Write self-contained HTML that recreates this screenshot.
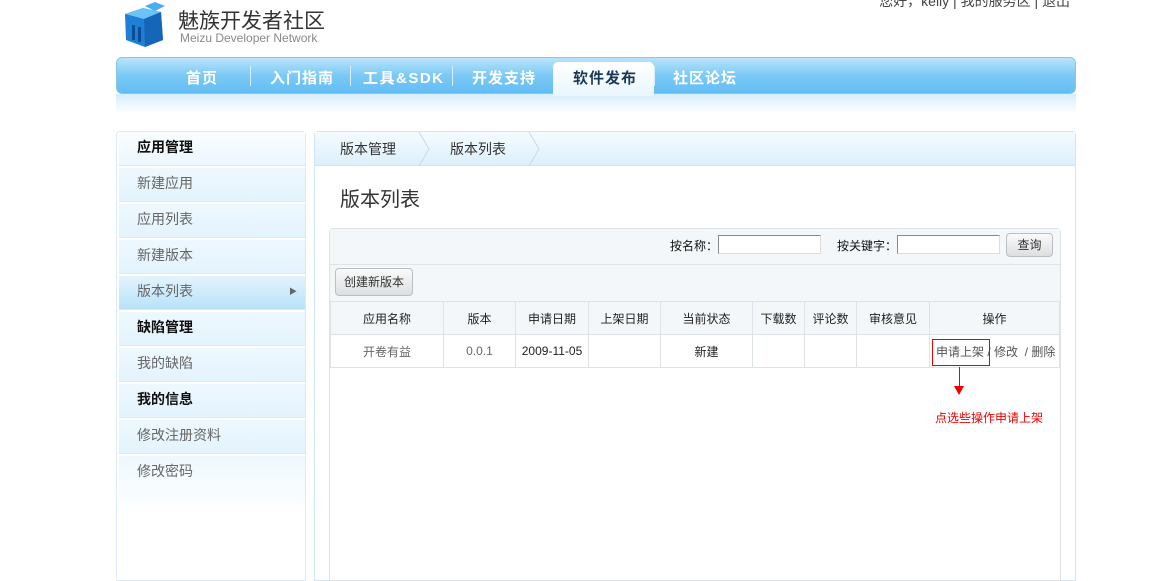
<!DOCTYPE html>
<html><head><meta charset="utf-8"><style>
*{margin:0;padding:0;box-sizing:border-box}
body{width:1176px;height:581px;overflow:hidden;background:#fff;font-family:"Liberation Sans","Noto Sans CJK SC",sans-serif;font-size:13px;color:#333;position:relative}
.a{position:absolute}
.nav{left:116px;top:57px;width:960px;height:37px;border-radius:6px;background:linear-gradient(#b8e4fb,#7cc9f5 50%,#62bdf3);border:1px solid #8cc6e6}
.refl{left:116px;top:94px;width:960px;height:20px;background:linear-gradient(#d6eefb,#fff)}
.ni{top:67px;color:#fff;font-size:15px;font-weight:bold;letter-spacing:1px}
.sep{top:66px;width:1px;height:20px;background:#d7effc}
.side{left:116px;top:131px;width:190px;height:450px;border:1px solid #dcecf6;border-radius:4px 4px 0 0;background:#fff}
.si{position:absolute;left:2px;width:186px;height:34px;padding-left:18px;line-height:31px;font-size:14px;color:#666;background:linear-gradient(#eef8fe,#e3f3fd);border-bottom:1px solid #d8ecf7}
.si.b{color:#111;font-weight:bold}
.main{left:314px;top:131px;width:762px;height:450px;border:1px solid #cfe6f4;border-radius:4px 4px 0 0}
.bc{left:0;top:0;width:760px;height:34px;background:linear-gradient(#f4fbff,#dcf0fc);border-bottom:1px solid #cfe6f4}
.box{left:329px;top:228px;width:732px;height:353px;border:1px solid #dde3e8;border-radius:4px 4px 0 0}
table{border-collapse:collapse;position:absolute;left:330px;top:301px;font-size:12px}
td{border:1px solid #dde3e8;text-align:center;height:33px;color:#222}
tr.h td{background:#f3f7fa}
input{position:absolute;height:19px;border:1px solid #888;border-right-color:#ddd;border-bottom-color:#ddd;background:#fff}
.btn{position:absolute;border:1px solid #b9bfc3;border-radius:4px;background:linear-gradient(#fafafa,#dcdfe1);font-size:12px;text-align:center;color:#333}
</style></head><body>
<div class="a" style="right:106px;top:-9px;font-size:14px;color:#444">您好，kelly | 我的服务区 | 退出</div>
<svg class="a" style="left:123px;top:2px" width="46" height="46" viewBox="0 0 46 46">
<path d="M2 12 L20 6 L38 10 L40 38 L22 45 L3 38Z" fill="#1f7fd6"/>
<path d="M2 12 L20 6 L38 10 L21 17Z" fill="#6bc3f5"/>
<path d="M21 17 L38 10 L40 38 L22 45Z" fill="#1565b8"/>
<path d="M22 4 L32 0 L42 4 L32 9Z" fill="#49aef0"/>
<rect x="9" y="23" width="3" height="15" fill="#0d4d95"/><rect x="15" y="25" width="3" height="15" fill="#0d4d95"/>
</svg>
<div class="a" style="left:178px;top:5px;font-size:21px;color:#333">魅族开发者社区</div>
<div class="a" style="left:180px;top:31px;font-size:12px;color:#888">Meizu Developer Network</div>
<div class="a nav"></div><div class="a refl"></div>
<div class="a" style="left:553px;top:62px;width:101px;height:34px;background:linear-gradient(#fff,#e8f6fe);border-radius:5px 5px 0 0"></div>
<div class="a ni" style="left:186px">首页</div>
<div class="a sep" style="left:250px"></div>
<div class="a ni" style="left:270px">入门指南</div>
<div class="a sep" style="left:350px"></div>
<div class="a ni" style="left:363px;letter-spacing:1.5px">工具&amp;SDK</div>
<div class="a sep" style="left:452px"></div>
<div class="a ni" style="left:472px">开发支持</div>
<div class="a ni" style="left:573px;color:#1c3a55">软件发布</div>
<div class="a sep" style="left:654px"></div>
<div class="a ni" style="left:673px">社区论坛</div>
<div class="a side">
<div class="si b" style="top:0;background:linear-gradient(#fafdff,#ecf7fe)">应用管理</div>
<div class="si" style="top:36px">新建应用</div>
<div class="si" style="top:72px">应用列表</div>
<div class="si" style="top:108px">新建版本</div>
<div class="si" style="top:144px;background:linear-gradient(#e4f4fd,#b8e2fa)">版本列表<span style="position:absolute;left:170px;top:0;font-size:8px;color:#666">▶</span></div>
<div class="si b" style="top:180px">缺陷管理</div>
<div class="si" style="top:216px">我的缺陷</div>
<div class="si b" style="top:252px">我的信息</div>
<div class="si" style="top:288px">修改注册资料</div>
<div class="si" style="top:324px;height:60px;background:linear-gradient(#eef8fe,#fff);border:0">修改密码</div>
</div>
<div class="a main">
<div class="a bc"></div>
<svg class="a" style="left:0;top:0" width="760" height="34"><path d="M104 0 L114 17 L104 34 M214 0 L224 17 L214 34" stroke="#c5dbe8" fill="none"/></svg>
<div class="a" style="left:25px;top:7px;font-size:14px;color:#333">版本管理</div>
<div class="a" style="left:135px;top:7px;font-size:14px;color:#333">版本列表</div>
<div class="a" style="left:25px;top:51px;font-size:20px;color:#333">版本列表</div>
</div>
<div class="a box"><div style="height:36px;background:#f3f7fa;border-bottom:1px solid #dde3e8"></div><div style="height:37px;background:#f3f7fa"></div></div>
<div class="a" style="left:670px;top:237px;font-size:12px;color:#111">按名称：</div>
<input style="left:718px;top:235px;width:103px">
<div class="a" style="left:837px;top:237px;font-size:12px;color:#111">按关键字：</div>
<input style="left:897px;top:235px;width:103px">
<div class="btn" style="left:1006px;top:233px;width:47px;height:24px;line-height:22px">查询</div>
<div class="btn" style="left:335px;top:268px;width:78px;height:28px;line-height:26px">创建新版本</div>
<table>
<tr class="h"><td style="width:113px">应用名称</td><td style="width:72px">版本</td><td style="width:73px">申请日期</td><td style="width:72px">上架日期</td><td style="width:92px">当前状态</td><td style="width:52px">下载数</td><td style="width:52px">评论数</td><td style="width:73px">审核意见</td><td style="width:130px">操作</td></tr>
<tr><td style="color:#666">开卷有益</td><td style="color:#666">0.0.1</td><td>2009-11-05</td><td></td><td>新建</td><td></td><td></td><td></td><td style="text-align:left;padding-left:6px;color:#555">申请上架 / 修改 &nbsp;/ 删除</td></tr>
</table>
<div class="a" style="left:932px;top:339px;width:58px;height:27px;border:1px solid #e00"></div>
<div class="a" style="left:959px;top:367px;width:1px;height:20px;background:#e00"></div>
<div class="a" style="left:954px;top:386px;width:0;height:0;border-left:5px solid transparent;border-right:5px solid transparent;border-top:9px solid #e00"></div>
<div class="a" style="left:935px;top:409px;font-size:12px;color:#e00">点选些操作申请上架</div>
</body></html>
